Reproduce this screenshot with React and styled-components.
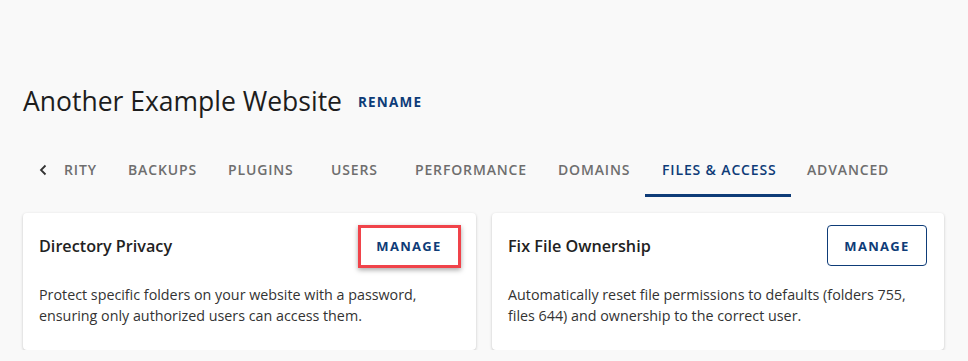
import React from "react";
import styled, { createGlobalStyle } from "styled-components";

const Global = createGlobalStyle`
  html, body { margin: 0; padding: 0; background: #f9f9f9; }
  body { font-family: "Open Sans", "Noto Sans", sans-serif; color: #222; }
`;

const Page = styled.div`
  padding: 79px 24px 0 23px;
  width: 921px;
`;

const TitleRow = styled.div`
  display: flex;
  align-items: center;
  gap: 16px;
`;

const Title = styled.h1`
  margin: 0;
  font-size: 26.5px;
  font-weight: 400;
  line-height: 44px;
  color: #1d1d1d;
`;

const TextButton = styled.button`
  border: none;
  background: none;
  padding: 0;
  margin-top: 2px;
  font-family: inherit;
  font-size: 13.5px;
  font-weight: 700;
  letter-spacing: 1.2px;
  color: #0e3c78;
  cursor: pointer;
`;

const Tabs = styled.nav`
  display: flex;
  align-items: stretch;
  height: 50px;
  margin-top: 24px;
`;

const Chevron = styled.span`
  display: flex;
  align-items: center;
  width: 41px;
  padding-left: 16px;
  padding-bottom: 5px;
  box-sizing: border-box;
  color: #333;
`;

const Tab = styled.div`
  display: flex;
  align-items: center;
  flex: none;
  width: ${(p) => p.$w}px;
  padding: 0 0 2px ${(p) => (p.$active ? 17 : 0)}px;
  font-size: 14px;
  font-weight: 600;
  letter-spacing: 0.85px;
  text-transform: uppercase;
  white-space: nowrap;
  color: ${(p) => (p.$active ? "#0e3c78" : "#6e6e6e")};
  border-bottom: 3px solid ${(p) => (p.$active ? "#0e3c78" : "transparent")};
  box-sizing: border-box;
`;

const Spacer = styled.span`
  flex: none;
  width: ${(p) => p.$w}px;
`;

const Cards = styled.div`
  display: grid;
  grid-template-columns: 453px 452px;
  gap: 16px;
  margin-top: 16px;
`;

const Card = styled.section`
  background: #fff;
  border-radius: 4px;
  box-shadow: 0 1px 3px rgba(0, 0, 0, 0.22);
  padding: 12px 16px 0 16px;
  height: 137px;
  box-sizing: border-box;
`;

const CardHead = styled.div`
  display: flex;
  align-items: center;
  justify-content: space-between;
  height: 41px;
`;

const CardTitle = styled.h2`
  margin: 0;
  font-size: 16.2px;
  font-weight: 600;
  color: #222;
`;

const Manage = styled.button`
  width: 100px;
  height: 41px;
  box-sizing: border-box;
  background: #fff;
  border: 1px solid ${(p) => (p.$outlined ? "#0e3c78" : "transparent")};
  border-radius: 4px;
  font-family: inherit;
  font-size: 13px;
  font-weight: 700;
  letter-spacing: 1.3px;
  color: #0e3c78;
  margin-right: 1px;
  position: relative;
`;

const Highlight = styled.span`
  position: absolute;
  left: -2px;
  top: -1px;
  width: 103px;
  height: 43px;
  box-sizing: border-box;
  border: 3px solid #f0434a;
  box-shadow: 0 2px 5px rgba(0, 0, 0, 0.35);
  pointer-events: none;
`;

const Desc = styled.p`
  margin: 18px 0 0 0;
  font-size: 14.3px;
  line-height: 21px;
  color: #333;
`;

const tabs = [
  { label: "rity", w: 64 },
  { label: "Backups", w: 100 },
  { label: "Plugins", w: 103 },
  { label: "Users", w: 84 },
  { label: "Performance", w: 143 },
  { label: "Domains", w: 87 },
  { label: "Files & Access", w: 146, active: true },
  { label: "Advanced", w: 100, pre: 16 },
];

export default function App() {
  return (
    <>
      <Global />
      <Page>
        <TitleRow>
          <Title>Another Example Website</Title>
          <TextButton>RENAME</TextButton>
        </TitleRow>
        <Tabs>
          <Chevron>
            <svg width="9" height="12" viewBox="0 0 9 12" fill="none">
              <path d="M6.5 1.5L2 6l4.5 4.5" stroke="#333" strokeWidth="1.8" />
            </svg>
          </Chevron>
          {tabs.map((t) => (
            <React.Fragment key={t.label}>
              {t.pre ? <Spacer $w={t.pre} /> : null}
              <Tab $active={t.active} $w={t.w}>
                {t.label}
              </Tab>
            </React.Fragment>
          ))}
        </Tabs>
        <Cards>
          <Card>
            <CardHead>
              <CardTitle>Directory Privacy</CardTitle>
              <Manage>
                MANAGE
                <Highlight />
              </Manage>
            </CardHead>
            <Desc>
              Protect specific folders on your website with a password,
              ensuring only authorized users can access them.
            </Desc>
          </Card>
          <Card>
            <CardHead>
              <CardTitle>Fix File Ownership</CardTitle>
              <Manage $outlined>MANAGE</Manage>
            </CardHead>
            <Desc>
              Automatically reset file permissions to defaults (folders 755,
              files 644) and ownership to the correct user.
            </Desc>
          </Card>
        </Cards>
      </Page>
    </>
  );
}
